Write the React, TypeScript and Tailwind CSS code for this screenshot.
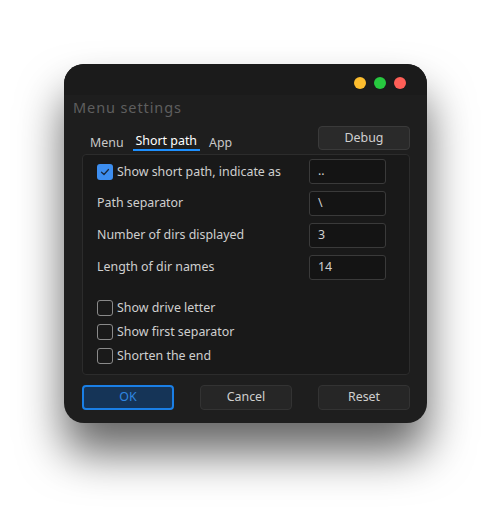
import React, { useState } from 'react';

const font = { fontFamily: '"Noto Sans", "Open Sans", sans-serif' };

const Checkbox: React.FC<{ checked: boolean; label: string; onToggle: () => void }> = ({ checked, label, onToggle }) => (
  <label className="flex items-center gap-[4px] cursor-pointer leading-[16px]" onClick={onToggle}>
    {checked ? (
      <span className="w-[16px] h-[16px] rounded-[3px] bg-[#3d8ef0] flex items-center justify-center">
        <svg width="10" height="10" viewBox="0 0 10 10" fill="none">
          <path d="M1.5 5.2 L4 7.5 L8.5 2.5" stroke="#1a2a40" strokeWidth="1.3" strokeLinecap="round" strokeLinejoin="round" />
        </svg>
      </span>
    ) : (
      <span className="w-[16px] h-[16px] rounded-[3px] border border-[#8a8a8a] bg-[#1a1a1a]" />
    )}
    <span className="text-[12.4px] text-[#cfcfcf]">{label}</span>
  </label>
);

const Field: React.FC<{ value: string }> = ({ value }) => (
  <div className="w-[77px] h-[25px] rounded-[3px] border border-[#3a3a3a] bg-[#141414] px-[8px] flex items-center text-[12.4px] text-[#d0d0d0]">
    {value}
  </div>
);

export default function App() {
  const [tab, setTab] = useState('Short path');
  const [opts, setOpts] = useState({ short: true, drive: false, first: false, end: false });
  const toggle = (k: keyof typeof opts) => setOpts({ ...opts, [k]: !opts[k] });

  return (
    <div className="w-[491px] h-[520px] bg-white pt-[64px] pl-[64px]" style={font}>
      <div className="w-[363px] h-[359px] rounded-[20px] bg-[#1e1e1e] shadow-[0_30px_45px_rgba(0,0,0,0.6)] overflow-hidden flex flex-col">
        {/* title bar */}
        <div className="h-[31px] bg-[#1b1b1b] flex items-center justify-end pr-[21px] gap-[8px] pt-[6px]">
          <span className="w-[12px] h-[12px] rounded-full bg-[#fdbd2e]" />
          <span className="w-[12px] h-[12px] rounded-full bg-[#27c93f]" />
          <span className="w-[12px] h-[12px] rounded-full bg-[#ff5f57]" />
        </div>

        <div className="pl-[9px] pt-[2px] h-[26px] text-[14.5px] tracking-[0.9px] text-[#5e5e5e] leading-[20px]">Menu settings</div>

        <div className="pl-[18px] pr-[17px] flex-1 flex flex-col">
          {/* tabs */}
          <div className="flex items-end justify-between h-[30px]">
            <div className="flex items-end gap-[9px] pl-[8px]">
              {['Menu', 'Short path', 'App'].map((t) => (
                <button
                  key={t}
                  onClick={() => setTab(t)}
                  className={
                    t === tab
                      ? 'text-[12.4px] text-white px-[3px] border-b-2 border-[#1e90ff] leading-[17px]'
                      : 'text-[12.4px] text-[#c8c8c8] leading-[17px]'
                  }
                >
                  {t}
                </button>
              ))}
            </div>
            <button className="w-[92px] h-[24px] mb-[1px] rounded-[4px] bg-[#2a2a2a] border border-[#3a3a3a] text-[12.4px] text-[#d0d0d0]">
              Debug
            </button>
          </div>

          {/* panel */}
          <div className="mt-[3px] h-[221px] rounded-[4px] border border-[#2c2c2c] bg-[#191919] pl-[14px] pr-[23px] pt-[4px]">
            <div className="flex items-center justify-between h-[25px]">
              <Checkbox checked={opts.short} label="Show short path, indicate as" onToggle={() => toggle('short')} />
              <Field value=".." />
            </div>
            <div className="flex items-center justify-between h-[25px] mt-[7px]">
              <span className="text-[12.4px] text-[#cfcfcf]">Path separator</span>
              <Field value="\" />
            </div>
            <div className="flex items-center justify-between h-[25px] mt-[7px]">
              <span className="text-[12.4px] text-[#cfcfcf]">Number of dirs displayed</span>
              <Field value="3" />
            </div>
            <div className="flex items-center justify-between h-[25px] mt-[7px]">
              <span className="text-[12.4px] text-[#cfcfcf]">Length of dir names</span>
              <Field value="14" />
            </div>

            <div className="mt-[20px] flex flex-col gap-[8px]">
              <Checkbox checked={opts.drive} label="Show drive letter" onToggle={() => toggle('drive')} />
              <Checkbox checked={opts.first} label="Show first separator" onToggle={() => toggle('first')} />
              <Checkbox checked={opts.end} label="Shorten the end" onToggle={() => toggle('end')} />
            </div>
          </div>

          {/* buttons */}
          <div className="mt-[10px] flex justify-between">
            <button className="w-[92px] h-[25px] rounded-[4px] border-2 border-[#1a7fe6] bg-[#153457] text-[12.4px] text-[#2f86e0]">
              OK
            </button>
            <button className="w-[92px] h-[25px] rounded-[4px] bg-[#262626] border border-[#333] text-[12.4px] text-[#cfcfcf]">
              Cancel
            </button>
            <button className="w-[92px] h-[25px] rounded-[4px] bg-[#262626] border border-[#333] text-[12.4px] text-[#cfcfcf]">
              Reset
            </button>
          </div>
        </div>
      </div>
    </div>
  );
}
